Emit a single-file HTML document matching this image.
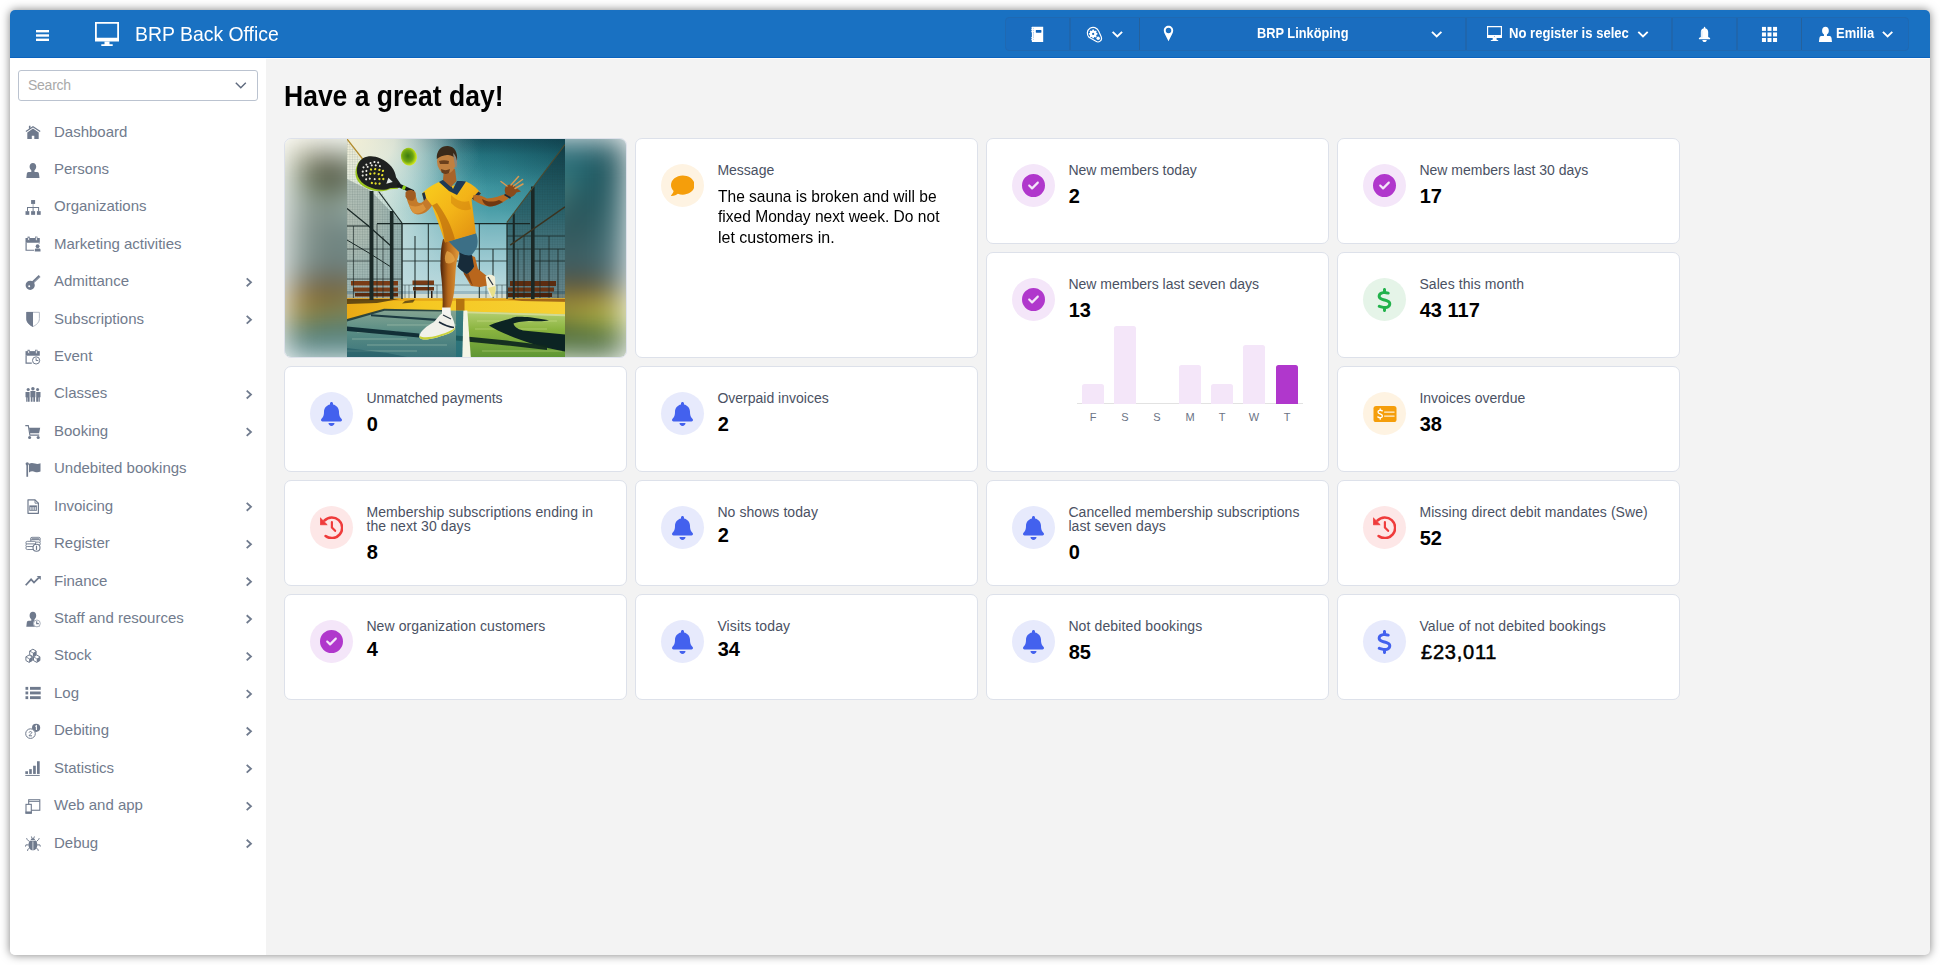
<!DOCTYPE html>
<html lang="en">
<head>
<meta charset="utf-8">
<title>BRP Back Office</title>
<style>
*{box-sizing:border-box;margin:0;padding:0}
html,body{width:1940px;height:965px;overflow:hidden;background:#fff}
body{font-family:"Liberation Sans",sans-serif;position:relative}
#frame{position:absolute;left:10px;top:10px;width:1920px;height:945px;background:#f3f3f3;border-radius:5px;box-shadow:0 0 10px rgba(0,0,0,.5);overflow:hidden}
#hdr{position:absolute;left:0;top:0;width:1920px;height:48px;background:#1971c2;border-bottom:1px solid #0b63be;color:#fff}
#side{position:absolute;left:0;top:48px;width:256px;height:897px;background:#fff}
#main{position:absolute;left:256px;top:48px;width:1664px;height:897px}
#main::before{content:"";position:absolute;left:0;top:0;width:1664px;height:1px;background:#fffdfa}
.abs{position:absolute}
/* header */
#burger{position:absolute;left:26px;top:20px;width:13px;height:11px}
#logo{position:absolute;left:85px;top:12px;width:24px;height:24px}
#brand{position:absolute;left:124.6px;top:0;height:48px;line-height:48px;font-size:20.6px;white-space:nowrap;transform-origin:0 50%;transform:scaleX(.9424)}
#tb{position:absolute;left:995px;top:7px;width:904px;height:34px;border-radius:4px;background:#1a6dbf;border:1px solid #1f69b2}
#tb .sep{position:absolute;top:0;width:1px;height:32px;background:#1f69b2}
#tb .t{position:absolute;top:0;height:32px;line-height:31px;font-size:14.4px;font-weight:bold;white-space:nowrap;color:#fff;transform-origin:0 50%}
#tb svg{position:absolute}
/* sidebar */
#search{position:absolute;left:8px;top:12px;width:240px;height:31px;border:1px solid #bbc3d0;border-radius:3px;background:#fff}
#search span{position:absolute;left:9px;top:0;line-height:29px;font-size:14px;letter-spacing:-0.25px;color:#a9a9a9}
#search svg{position:absolute;right:10px;top:10px}
.mi{position:absolute;left:0;width:256px;height:37px}
.mi .tx{position:absolute;left:44px;top:0;line-height:37px;font-size:15px;color:#717b8d;white-space:nowrap}
.mi svg.ic{position:absolute;left:15px;top:11px;width:16px;height:16px;overflow:visible}
.mi svg.ch{position:absolute;left:235px;top:13px;width:9px;height:11px;overflow:visible}
/* content */
#title{position:absolute;left:18.2px;top:20px;font-size:29px;font-weight:bold;color:#000;line-height:36px;white-space:nowrap;transform-origin:0 50%;transform:scaleX(.914)}
.card{position:absolute;width:343px;height:106px;background:#fff;border:1px solid #dde1ea;border-radius:7px}
.card.tall{height:220px}
.c1{left:18px}.c2{left:369px}.c3{left:720px}.c4{left:1071px}
.r1{top:80px}.r2{top:194px}.r3{top:308px}.r4{top:422px}.r5{top:536px}
.circ{position:absolute;left:25px;top:25px;width:43px;height:43px;border-radius:50%}
.circ svg{position:absolute}
.lbl{position:absolute;left:81.4px;top:24px;font-size:14px;line-height:14px;color:#4a5163;white-space:nowrap}
.val{position:absolute;left:81.7px;top:45px;font-size:20px;line-height:24px;font-weight:bold;color:#000;white-space:nowrap}
.bl{background:#e7eafc}.pu{background:#f4e6f9}.or{background:#fef3e2}.gr{background:#e5f4e8}.rd{background:#fde7e7}
.msg{position:absolute;left:81.7px;font-size:16.4px;line-height:20px;color:#000;white-space:nowrap;transform-origin:0 50%}
.chart{position:absolute;left:0;top:0;width:341px;height:218px}
.chart .axis{position:absolute;left:90px;top:150px;width:226px;height:1px;background:#e2e2e2}
.chart .bar{position:absolute;bottom:67px;width:22px;background:#f4e6f9;border-radius:2.5px 2.5px 0 0}
.chart .bar.on{background:#b037cc}
.chart .bl2{position:absolute;top:156px;width:22px;text-align:center;font-size:11px;line-height:16px;color:#6b7385}
#imgcard{overflow:hidden}
#imgcard .bgw{position:absolute;left:0;top:0;width:341px;height:218px;filter:blur(16px)}
#imgcard .bgp{position:absolute;left:0;top:0;display:block}
#imgcard .fgp{position:absolute;left:62px;top:0;display:block}
</style>
</head>
<body>
<div id="frame">
<div id="hdr">
<svg id="burger" viewBox="0 0 13 11"><rect x="0" y="0" width="13" height="2.4" fill="#fff"/><rect x="0" y="4.3" width="13" height="2.4" fill="#fff"/><rect x="0" y="8.6" width="13" height="2.4" fill="#fff"/></svg>
<svg id="logo" viewBox="0 0 24 24"><path fill="#fff" fill-rule="evenodd" d="M0 0h24v19.6H0zM1.8 1.8v14h20.4v-14z"/><path fill="#fff" d="M9.5 19.6h5v2.7h3.2V24H6.3v-1.7h3.2z"/></svg>
<div id="brand">BRP Back Office</div>
<div id="tb"><svg style="left:0;top:0" width="902" height="32" viewBox="0 0 902 32"><rect x="63.5" y="0" width="1" height="32" fill="#25619c"/><rect x="133" y="0" width="1" height="32" fill="#25619c"/><rect x="459.5" y="0" width="1" height="32" fill="#25619c"/><rect x="665.5" y="0" width="1" height="32" fill="#25619c"/><rect x="730.5" y="0" width="1" height="32" fill="#25619c"/><rect x="795" y="0" width="1" height="32" fill="#25619c"/><g transform="translate(24.50 8.40) scale(1.0000 0.9935)"><path fill="#fff" d="M1.400 .300H12.700V15.700H1.400V14.100L.400 13.400 1.400 12.700V12.100L.400 11.400 1.400 10.700V6.100L.400 5.400 1.400 4.700V4.100L.400 3.400 1.400 2.700V2.200L.400 1.500 1.400 .800z"/><rect x="5.300" y="3.500" width="5.600" height="3" rx=".5" fill="#0f62b8"/><g fill="#9fc1e6"><circle cx="2.900" cy="1.900" r=".55"/><circle cx="2.900" cy="3.900" r=".55"/><circle cx="2.900" cy="6" r=".55"/><circle cx="2.900" cy="10.900" r=".55"/><circle cx="2.900" cy="13" r=".55"/><rect x="2.600" y="6.400" width=".6" height="4"/></g></g><g transform="translate(80.70 8.70) scale(0.9550 0.9550)"><path d="M2.390 11.110A6.150 6.150 0 1 1 12.480 4.480L15.300 10.880A3.750 3.750 0 0 1 9.660 15.250z" fill="none" stroke="#fff" stroke-width="1.200" stroke-linejoin="round"/><path fill="#fff" fill-rule="evenodd" d="M6.060 3.040H7.460L7.700 4.020 8.620 4.400 9.480 3.880 10.470 4.870 9.950 5.730 10.330 6.650 11.310 6.890V8.290L10.330 8.530 9.950 9.450 10.470 10.310 9.480 11.300 8.620 10.780 7.700 11.160 7.460 12.140H6.060L5.820 11.160 4.900 10.780 4.040 11.300 3.050 10.310 3.570 9.450 3.190 8.530 2.210 8.290V6.890L3.190 6.650 3.570 5.730 3.050 4.870 4.040 3.880 4.900 4.400 5.820 4.020zM6.760 6.440A1.150 1.150 0 1 0 6.760 8.740A1.150 1.150 0 1 0 6.760 6.440z"/><circle cx="12" cy="12" r="1.800" fill="#fff"/></g><path d="M106.70 13.90L111.40 18.50L116.10 13.90" fill="none" stroke="#fff" stroke-width="1.900"/><g transform="translate(157.50 7.50) scale(1.0000 1.0000)"><path fill="#fff" fill-rule="evenodd" d="M5 .300C7.600 .300 9.700 2.400 9.700 5C9.700 6.200 9.300 7.200 8.800 8.300L5 15.700L1.200 8.300C.700 7.200 .300 6.200 .300 5C.300 2.400 2.400 .300 5 .300zM5 2.300A2.750 2.750 0 1 0 5 7.800A2.750 2.750 0 1 0 5 2.300z"/></g><path d="M426.00 13.90L430.70 18.50L435.40 13.90" fill="none" stroke="#fff" stroke-width="1.900"/><g transform="translate(481.00 7.90) scale(1.0000 1.0000)"><path fill="#fff" fill-rule="evenodd" d="M0 0H15V12.100H0zM1.150 1.250V9.200H13.850V1.250z"/><path fill="#fff" d="M5.700 12.100H9.600V13.900L11.200 14.300V15.100H3.800V14.300L5.700 13.900z"/><circle cx="7.500" cy="10.600" r=".6" fill="#8db5e0"/></g><path d="M632.30 13.90L637.00 18.50L641.70 13.90" fill="none" stroke="#fff" stroke-width="1.900"/><g transform="translate(692.40 8.40) scale(1.0090 1.0000)"><path fill="#fff" d="M5.400 1.100A.7 .7 0 0 1 6.800 1.100V1.900C8.600 2.300 9.700 3.700 9.700 5.600V10.600L11.600 11.700V12.800H.500V11.700L2.400 10.600V5.600C2.400 3.700 3.500 2.300 5.400 1.900z"/><path fill="#fff" d="M3.900 13.500H8.300C8.300 14.700 7.300 15.600 6.100 15.600C4.900 15.600 3.900 14.700 3.900 13.500z"/><path d="M3.500 4.500V11.200" stroke="#1a6dbf" stroke-opacity=".35" stroke-width=".6" fill="none"/></g><g transform="translate(755.95 8.90) scale(1.0000 1.0000)"><rect x="0" y="0" width="4" height="4" fill="#fff"/><rect x="5.55" y="0" width="4" height="4" fill="#fff"/><rect x="11.1" y="0" width="4" height="4" fill="#fff"/><rect x="0" y="5.55" width="4" height="4" fill="#fff"/><rect x="5.55" y="5.55" width="4" height="4" fill="#fff"/><rect x="11.1" y="5.55" width="4" height="4" fill="#fff"/><rect x="0" y="11.1" width="4" height="4" fill="#fff"/><rect x="5.55" y="11.1" width="4" height="4" fill="#fff"/><rect x="11.1" y="11.1" width="4" height="4" fill="#fff"/></g><g transform="translate(812.50 8.50) scale(0.9924 0.9934)"><path fill="#fff" d="M7 .300C9 .300 10.400 1.900 10.400 4.200C10.400 5.800 9.700 7.300 8.500 8V9.500H11.200C12.300 9.500 12.800 10.200 13.100 11.500L13.600 15.500H.400L.900 11.500C1.200 10.200 1.700 9.500 2.800 9.500H5.500V8C4.300 7.300 3.600 5.800 3.600 4.200C3.600 1.900 5 .300 7 .300z"/></g><path d="M876.90 13.90L881.60 18.50L886.30 13.90" fill="none" stroke="#fff" stroke-width="1.900"/></svg><div class="t" style="left:250.600px;transform:scaleX(.889)">BRP Linköping</div><div class="t" style="left:502.500px;width:132px;overflow:hidden;transform:scaleX(.908)">No register is selected</div><div class="t" style="left:830px;transform:scaleX(.9)">Emilia</div></div>
</div>
<div id="side">
<div id="search"><span>Search</span><svg width="12" height="8" viewBox="0 0 12 8"><path d="M.8 1.800l5 5 5-5" fill="none" stroke="#5f6a7e" stroke-width="1.400"/></svg></div>
<div class="mi" style="top:55.00px"><svg class="ic" viewBox="0 0 16 16" style="top:10.00px"><g transform="translate(0 0.90)"><path d="M.9 7.700L8 2.900L15.200 7.700" fill="none" stroke="#6f7a8d" stroke-width="1.250"/><path fill="#6f7a8d" d="M3.900 1.900h1.600v3h-1.600zM2.300 8.600L8 4.700L13.700 8.600V15.100H9.300V11.800H6.800V15.100H2.300z"/></g></svg><span class="tx">Dashboard</span></div>
<div class="mi" style="top:92.00px"><svg class="ic" viewBox="0 0 16 16" style="top:11.00px"><g transform="translate(0 0.32)"><path fill="#6f7a8d" d="M7.900 1.700C9.900 1.700 11.200 3.200 11.200 5.300C11.200 6.900 10.500 8.300 9.500 9V10.700H12.200C13.300 10.700 13.800 11.400 14 12.600L14.500 16.700H1.300L1.800 12.600C2 11.400 2.500 10.700 3.600 10.700H6.300V9C5.300 8.300 4.600 6.900 4.600 5.300C4.600 3.200 5.900 1.700 7.900 1.700z"/></g></svg><span class="tx">Persons</span></div>
<div class="mi" style="top:129.00px"><svg class="ic" viewBox="0 0 16 16" style="top:11.00px"><g transform="translate(0 0.74)"><g fill="#6f7a8d"><rect x="6.100" y="1.300" width="4" height="3.900"/><rect x=".5" y="12.400" width="3.800" height="3.700"/><rect x="6.100" y="12.400" width="4" height="3.700"/><rect x="11.900" y="12.400" width="3.800" height="3.700"/><path d="M2 8.300H14.100V12.400H13.100V9.300H8.600V12.400H7.600V9.300H3V12.400H2z"/></g><rect x="7.600" y="5.200" width="1" height="3.100" fill="#aab1bd"/></g></svg><span class="tx">Organizations</span></div>
<div class="mi" style="top:167.00px"><svg class="ic" viewBox="0 0 16 16" style="top:11.00px"><g transform="translate(0 0.16)"><path fill="#6f7a8d" d="M.5 1.800H14.800V6.500H.5z"/><path d="M1.100 6.500V14.100H9" fill="none" stroke="#6f7a8d" stroke-width="1.200"/><path d="M14.200 6.500V7.800" stroke="#aab1bd" stroke-width="1" fill="none"/><g fill="#fff" stroke="#6f7a8d" stroke-width=".7"><rect x="2.900" y=".8" width="1.600" height="3.700"/><rect x="10.500" y=".8" width="1.600" height="3.700"/></g><circle cx="12.600" cy="10.100" r="1.900" fill="#6f7a8d"/><path fill="#6f7a8d" d="M9.800 15.400V13.600C9.800 12.800 10.400 12.300 11.200 12.300H14.100C14.900 12.300 15.500 12.800 15.500 13.600V15.400z"/></g></svg><span class="tx">Marketing activities</span></div>
<div class="mi" style="top:204.00px"><svg class="ic" viewBox="0 0 16 16" style="top:11.00px"><g transform="translate(0 0.58)"><path d="M6.800 9.800L14.600 2.400" stroke="#6f7a8d" stroke-width="2.700" fill="none"/><path d="M8.800 9L15.200 2.900" stroke="#fff" stroke-width=".5" stroke-opacity=".7" fill="none"/><path fill="#6f7a8d" fill-rule="evenodd" d="M5.200 7.100A4.600 4.600 0 1 0 5.200 16.300A4.600 4.600 0 1 0 5.200 7.100zM4.200 11.600A1 1 0 1 0 4.200 13.600A1 1 0 1 0 4.200 11.600z"/></g></svg><span class="tx">Admittance</span><svg class="ch" viewBox="0 0 9 11" style="top:14px"><path transform="translate(0 0.83)" d="M1.700 1.600L6 5.500L1.700 9.400" fill="none" stroke="#707b8e" stroke-width="1.800"/></svg></div>
<div class="mi" style="top:242.00px"><svg class="ic" viewBox="0 0 16 16" style="top:11.00px"><g transform="translate(0 0.00)"><path d="M1.700 1.300H14.400V7.600C14.400 11.400 11.500 13.900 8 15.500C4.500 13.900 1.700 11.400 1.700 7.600z" fill="#fff" stroke="#aab1bd" stroke-width=".9"/><path fill="#6f7a8d" d="M1.300 .9H8V15.900C4.300 14.300 1.300 11.700 1.300 7.600z"/></g></svg><span class="tx">Subscriptions</span><svg class="ch" viewBox="0 0 9 11" style="top:14px"><path transform="translate(0 0.25)" d="M1.700 1.600L6 5.500L1.700 9.400" fill="none" stroke="#707b8e" stroke-width="1.800"/></svg></div>
<div class="mi" style="top:279.00px"><svg class="ic" viewBox="0 0 16 16" style="top:11.00px"><g transform="translate(0 0.42)"><path fill="#6f7a8d" d="M.5 2.700H14.800V7.300H.5z"/><path d="M1.100 7.300V14.800H6.800" fill="none" stroke="#6f7a8d" stroke-width="1.200"/><g fill="#fff" stroke="#6f7a8d" stroke-width=".7"><rect x="2.900" y="1.700" width="1.600" height="3.700"/><rect x="10.500" y="1.700" width="1.600" height="3.700"/></g><circle cx="11.100" cy="12" r="3.600" fill="#fff" stroke="#6f7a8d" stroke-width="1"/><path d="M11.100 9.800V12.100H13.300" fill="none" stroke="#6f7a8d" stroke-width="1"/></g></svg><span class="tx">Event</span></div>
<div class="mi" style="top:316.00px"><svg class="ic" viewBox="0 0 16 16" style="top:11.00px"><g transform="translate(0 0.84)"><g fill="#6f7a8d"><circle cx="7.900" cy="2.800" r="1.750"/><circle cx="3.200" cy="3.700" r="1.550"/><circle cx="12.600" cy="3.700" r="1.550"/><path d="M5.400 5.100H10.400V11.300H10V16H8.300V11.500H7.500V16H5.800V11.300H5.400z"/><path d="M.5 6.200H4.600V16H3V11.700H2.600V16H1.200V11.500H.5z"/><path d="M11.200 6.200H15.500V11.500H14.800V16H13.400V11.700H13V16H11.200z"/></g></g></svg><span class="tx">Classes</span><svg class="ch" viewBox="0 0 9 11" style="top:15px"><path transform="translate(0 0.09)" d="M1.700 1.600L6 5.500L1.700 9.400" fill="none" stroke="#707b8e" stroke-width="1.800"/></svg></div>
<div class="mi" style="top:354.00px"><svg class="ic" viewBox="0 0 16 16" style="top:11.00px"><g transform="translate(0 0.26)"><path d="M.3 2.400H3.300L4.900 11.900H14.200" fill="none" stroke="#6f7a8d" stroke-width="1.100"/><path fill="#6f7a8d" d="M4 4.500H15.200L14.100 9.900H4.900z"/><circle cx="4.600" cy="14.200" r="1.550" fill="#6f7a8d"/><circle cx="13.200" cy="14.200" r="1.550" fill="#6f7a8d"/></g></svg><span class="tx">Booking</span><svg class="ch" viewBox="0 0 9 11" style="top:14px"><path transform="translate(0 0.51)" d="M1.700 1.600L6 5.500L1.700 9.400" fill="none" stroke="#707b8e" stroke-width="1.800"/></svg></div>
<div class="mi" style="top:391.00px"><svg class="ic" viewBox="0 0 16 16" style="top:11.00px"><g transform="translate(0 0.68)"><g fill="#6f7a8d"><rect x="1.400" y="3" width="1.700" height="13.100"/><circle cx="2.250" cy="3.100" r="1.650"/><path d="M4 3.100C6 1.900 8 2.200 10 2.900C12 3.600 13.800 3.300 15.500 2.500V10.800C13.800 11.600 12 11.900 10 11.200C8 10.500 6 10.400 4 11.700z"/></g></g></svg><span class="tx">Undebited bookings</span></div>
<div class="mi" style="top:429.00px"><svg class="ic" viewBox="0 0 16 16" style="top:11.00px"><g transform="translate(0 0.10)"><path d="M3 1.700H10L13.400 5.100V15.200H3z" fill="#fff" stroke="#6f7a8d" stroke-width="1.200" stroke-linejoin="round"/><path d="M10 1.700V5.100H13.400" fill="none" stroke="#6f7a8d" stroke-width=".9"/><rect x="4.300" y="7.300" width="7.600" height="5.400" fill="#6f7a8d"/><g fill="#d5d9df"><rect x="5.100" y="9" width="1.500" height="2.800"/><rect x="7.350" y="9" width="1.500" height="2.800"/><rect x="9.600" y="9" width="1.500" height="2.800"/></g></g></svg><span class="tx">Invoicing</span><svg class="ch" viewBox="0 0 9 11" style="top:14px"><path transform="translate(0 0.35)" d="M1.700 1.600L6 5.500L1.700 9.400" fill="none" stroke="#707b8e" stroke-width="1.800"/></svg></div>
<div class="mi" style="top:466.00px"><svg class="ic" viewBox="0 0 16 16" style="top:11.00px"><g transform="translate(0 0.52)"><g fill="#fff" stroke="#6f7a8d" stroke-width=".9"><rect x="5.500" y="1.800" width="9.800" height="3.200" rx="1.500"/><rect x="5.500" y="4.200" width="9.800" height="3.200" rx="1.500"/><rect x="5.500" y="6.600" width="9.800" height="3.200" rx="1.500"/><rect x=".9" y="5.800" width="9.800" height="3" rx="1.400"/><rect x=".9" y="8.400" width="9.800" height="3" rx="1.400"/><rect x=".9" y="11" width="9.800" height="3" rx="1.400"/></g><path d="M6.500 3.400H14.300" stroke="#6f7a8d" stroke-width="1.300"/><circle cx="11.500" cy="12.300" r="3.500" fill="#fff" stroke="#6f7a8d" stroke-width="1.100"/><path d="M11.500 10.200V14.400" stroke="#6f7a8d" stroke-width="1.200"/></g></svg><span class="tx">Register</span><svg class="ch" viewBox="0 0 9 11" style="top:14px"><path transform="translate(0 0.77)" d="M1.700 1.600L6 5.500L1.700 9.400" fill="none" stroke="#707b8e" stroke-width="1.800"/></svg></div>
<div class="mi" style="top:504.00px"><svg class="ic" viewBox="0 0 16 16" style="top:10.00px"><g transform="translate(0 0.94)"><path d="M.7 12.300L6.100 6.500L9 9.600L13.800 4.700" fill="none" stroke="#6f7a8d" stroke-width="1.800"/><path fill="#6f7a8d" d="M11.700 3.100H15.800V7.100z"/></g></svg><span class="tx">Finance</span><svg class="ch" viewBox="0 0 9 11" style="top:14px"><path transform="translate(0 0.19)" d="M1.700 1.600L6 5.500L1.700 9.400" fill="none" stroke="#707b8e" stroke-width="1.800"/></svg></div>
<div class="mi" style="top:541.00px"><svg class="ic" viewBox="0 0 16 16" style="top:11.00px"><g transform="translate(0 0.36)"><path fill="#6f7a8d" d="M7.900 1.500C9.900 1.500 11.200 3 11.200 5.100C11.200 6.700 10.500 8.100 9.500 8.800V10.500H12.200C13.300 10.500 13.800 11.200 14 12.400L14.500 16.400H1.300L1.800 12.400C2 11.200 2.500 10.500 3.600 10.500H6.300V8.800C5.300 8.100 4.600 6.700 4.600 5.100C4.600 3 5.900 1.500 7.900 1.500z"/><circle cx="11.900" cy="13.100" r="3.400" fill="#fff" stroke="#aab1bd" stroke-width="1"/><path d="M11.700 11V13.300H13.800" fill="none" stroke="#6f7a8d" stroke-width="1.100"/></g></svg><span class="tx">Staff and resources</span><svg class="ch" viewBox="0 0 9 11" style="top:14px"><path transform="translate(0 0.61)" d="M1.700 1.600L6 5.500L1.700 9.400" fill="none" stroke="#707b8e" stroke-width="1.800"/></svg></div>
<div class="mi" style="top:578.00px"><svg class="ic" viewBox="0 0 16 16" style="top:11.00px"><g transform="translate(0 0.78)"><polygon points="7.90,1.40 11.10,3.25 11.10,6.95 7.90,8.80 4.70,6.95 4.70,3.25" fill="#fff" stroke="#6f7a8d" stroke-width="1" stroke-linejoin="round"/><polygon points="7.90,5.10 11.10,3.25 11.10,6.95 7.90,8.80" fill="#6f7a8d"/><path d="M4.70 3.25L7.90 5.10" stroke="#6f7a8d" stroke-width=".8" fill="none"/><polygon points="4.10,7.20 7.30,9.05 7.30,12.75 4.10,14.60 0.90,12.75 0.90,9.05" fill="#fff" stroke="#6f7a8d" stroke-width="1" stroke-linejoin="round"/><polygon points="4.10,10.90 7.30,9.05 7.30,12.75 4.10,14.60" fill="#6f7a8d"/><path d="M0.90 9.05L4.10 10.90" stroke="#6f7a8d" stroke-width=".8" fill="none"/><polygon points="11.70,7.20 14.90,9.05 14.90,12.75 11.70,14.60 8.50,12.75 8.50,9.05" fill="#fff" stroke="#6f7a8d" stroke-width="1" stroke-linejoin="round"/><polygon points="11.70,10.90 14.90,9.05 14.90,12.75 11.70,14.60" fill="#6f7a8d"/><path d="M8.50 9.05L11.70 10.90" stroke="#6f7a8d" stroke-width=".8" fill="none"/></g></svg><span class="tx">Stock</span><svg class="ch" viewBox="0 0 9 11" style="top:15px"><path transform="translate(0 0.03)" d="M1.700 1.600L6 5.500L1.700 9.400" fill="none" stroke="#707b8e" stroke-width="1.800"/></svg></div>
<div class="mi" style="top:616.00px"><svg class="ic" viewBox="0 0 16 16" style="top:11.00px"><g transform="translate(0 0.20)"><g fill="#6f7a8d"><rect x=".5" y="1.700" width="2.700" height="2.900"/><rect x=".5" y="6.300" width="2.700" height="2.900"/><rect x=".5" y="11" width="2.700" height="2.900"/><rect x="5" y="1.700" width="10.700" height="2.900"/><rect x="5" y="6.300" width="10.700" height="2.900"/><rect x="5" y="11" width="10.700" height="2.900"/></g></g></svg><span class="tx">Log</span><svg class="ch" viewBox="0 0 9 11" style="top:14px"><path transform="translate(0 0.45)" d="M1.700 1.600L6 5.500L1.700 9.400" fill="none" stroke="#707b8e" stroke-width="1.800"/></svg></div>
<div class="mi" style="top:653.00px"><svg class="ic" viewBox="0 0 16 16" style="top:11.00px"><g transform="translate(0 0.62)"><circle cx="11.100" cy="5.200" r="4.100" fill="#6f7a8d"/><path d="M10.300 3.900L11.400 3.100V7.400" fill="none" stroke="#fff" stroke-width="1.100"/><circle cx="5.500" cy="11" r="4.800" fill="#fff" stroke="#6f7a8d" stroke-width="1"/><path d="M4.100 10C4.100 8.600 6.800 8.600 6.800 10C6.800 11.100 4.200 11.700 4.100 13.200H7" fill="none" stroke="#6f7a8d" stroke-width="1"/></g></svg><span class="tx">Debiting</span><svg class="ch" viewBox="0 0 9 11" style="top:14px"><path transform="translate(0 0.87)" d="M1.700 1.600L6 5.500L1.700 9.400" fill="none" stroke="#707b8e" stroke-width="1.800"/></svg></div>
<div class="mi" style="top:691.00px"><svg class="ic" viewBox="0 0 16 16" style="top:11.00px"><g transform="translate(0 0.04)"><g fill="#6f7a8d"><rect x=".3" y="11.200" width="2.700" height="2.700"/><rect x="4.200" y="9.100" width="2.600" height="4.800"/><rect x="8.100" y="5.700" width="2.700" height="8.200"/><rect x="12" y="1.200" width="2.700" height="12.700"/><rect x=".3" y="14.900" width="14.400" height=".95"/></g></g></svg><span class="tx">Statistics</span><svg class="ch" viewBox="0 0 9 11" style="top:14px"><path transform="translate(0 0.29)" d="M1.700 1.600L6 5.500L1.700 9.400" fill="none" stroke="#707b8e" stroke-width="1.800"/></svg></div>
<div class="mi" style="top:728.00px"><svg class="ic" viewBox="0 0 16 16" style="top:11.00px"><g transform="translate(0 0.46)"><rect x="3.700" y="2.300" width="11.100" height="10.500" fill="#fff" stroke="#6f7a8d" stroke-width="1.100"/><path d="M3.700 4H14.800" stroke="#6f7a8d" stroke-width=".9"/><rect x="1" y="6.900" width="5.300" height="8.800" fill="#fff" stroke="#6f7a8d" stroke-width="1.100"/><rect x=".5" y="14" width="6.300" height="2.200" fill="#6f7a8d"/></g></svg><span class="tx">Web and app</span><svg class="ch" viewBox="0 0 9 11" style="top:14px"><path transform="translate(0 0.71)" d="M1.700 1.600L6 5.500L1.700 9.400" fill="none" stroke="#707b8e" stroke-width="1.800"/></svg></div>
<div class="mi" style="top:766.00px"><svg class="ic" viewBox="0 0 16 16" style="top:10.00px"><g transform="translate(0 0.88)"><g fill="none" stroke="#6f7a8d" stroke-width="1"><path d="M6.400 1.600L7.300 4M9.400 1.600L8.500 4"/><path d="M4.300 6.700L2 4.400L1.600 3.300M11.500 6.700L13.800 4.400L14.200 3.300"/><path d="M3.700 10H.9L.5 11.700M12.100 10H14.900L15.300 11.700"/><path d="M4.500 13.300L2.600 14.700V16M11.300 13.300L13.200 14.700V16"/></g><path fill="#6f7a8d" d="M7.900 3.300C9 3.300 9.900 4.100 10.100 5.100C11.500 5.900 12.300 7.700 12.300 10C12.300 13 10.400 15.300 7.900 15.300C5.400 15.300 3.500 13 3.500 10C3.500 7.700 4.300 5.900 5.700 5.100C5.900 4.100 6.800 3.300 7.900 3.300z"/><path d="M7.900 6.500V15M5 5.600H10.800" stroke="#dfe2e7" stroke-width=".9" fill="none"/></g></svg><span class="tx">Debug</span><svg class="ch" viewBox="0 0 9 11" style="top:14px"><path transform="translate(0 0.13)" d="M1.700 1.600L6 5.500L1.700 9.400" fill="none" stroke="#707b8e" stroke-width="1.800"/></svg></div>
</div>
<div id="main">
<div id="title">Have a great day!</div>
<div class="card c1 r1 tall" id="imgcard"><div class="bgw"><svg class="bgp" viewBox="0 0 218 218" preserveAspectRatio="none" width="341" height="218"><defs><linearGradient id="skyb" x1="0" y1="0" x2="0" y2="1"><stop offset="0" stop-color="#1f6572"/><stop offset=".1" stop-color="#2c8994"/><stop offset=".45" stop-color="#4c9fa9"/><stop offset=".8" stop-color="#9ccbd2"/><stop offset="1" stop-color="#c6dfe0"/></linearGradient><radialGradient id="sunb" cx="0" cy="0" r="1" gradientUnits="userSpaceOnUse" gradientTransform="translate(-8 70) scale(150 160)"><stop offset="0" stop-color="#f1f1e0" stop-opacity="1"/><stop offset=".25" stop-color="#e8eee0" stop-opacity=".9"/><stop offset=".5" stop-color="#dcebe4" stop-opacity=".6"/><stop offset=".72" stop-color="#d0e4e0" stop-opacity=".25"/><stop offset=".88" stop-color="#d0e4e0" stop-opacity=".07"/><stop offset="1" stop-color="#d0e4e0" stop-opacity="0"/></radialGradient><radialGradient id="sun2b" cx="0" cy="0" r="1" gradientUnits="userSpaceOnUse" gradientTransform="translate(0 0) scale(135 95)"><stop offset="0" stop-color="#f3efd6" stop-opacity="1"/><stop offset=".35" stop-color="#eceedd" stop-opacity=".85"/><stop offset=".65" stop-color="#dcebe4" stop-opacity=".4"/><stop offset=".85" stop-color="#d0e4e0" stop-opacity=".1"/><stop offset="1" stop-color="#d0e4e0" stop-opacity="0"/></radialGradient><radialGradient id="dkb" cx="0" cy="0" r="1" gradientUnits="userSpaceOnUse" gradientTransform="translate(232 0) scale(120 100)"><stop offset="0" stop-color="#0a3642" stop-opacity=".6"/><stop offset=".35" stop-color="#0c3a46" stop-opacity=".32"/><stop offset=".7" stop-color="#0e3f4c" stop-opacity=".1"/><stop offset="1" stop-color="#0e3f4c" stop-opacity="0"/></radialGradient><linearGradient id="dk2b" x1="0" y1="0" x2="0" y2="1"><stop offset="0" stop-color="#0a2f3c" stop-opacity=".35"/><stop offset=".3" stop-color="#0a2f3c" stop-opacity="0"/></linearGradient><linearGradient id="yelb" x1="0" y1="0" x2="1" y2="0"><stop offset="0" stop-color="#eaa915"/><stop offset=".35" stop-color="#f5c822"/><stop offset="1" stop-color="#f6d034"/></linearGradient><linearGradient id="ctlb" x1="0" y1="0" x2="0" y2="1"><stop offset="0" stop-color="#86a592"/><stop offset=".45" stop-color="#5a8d85"/><stop offset="1" stop-color="#3c757b"/></linearGradient><linearGradient id="ctrb" x1="0" y1="0" x2="0" y2="1"><stop offset="0" stop-color="#b4cf72"/><stop offset=".4" stop-color="#8ab43f"/><stop offset="1" stop-color="#5f9634"/></linearGradient><radialGradient id="ballb" cx=".45" cy=".45" r=".6"><stop offset="0" stop-color="#3c7a0f"/><stop offset=".55" stop-color="#6ea512"/><stop offset=".85" stop-color="#c5e019"/><stop offset="1" stop-color="#e2f03a"/></radialGradient><linearGradient id="shb" x1="0" y1="0" x2="1" y2="1"><stop offset="0" stop-color="#f9cf1d"/><stop offset=".5" stop-color="#f3b318"/><stop offset="1" stop-color="#dd8a10"/></linearGradient><linearGradient id="legb" x1="0" y1="0" x2="1" y2="0"><stop offset="0" stop-color="#4d2209"/><stop offset=".4" stop-color="#b3661a"/><stop offset="1" stop-color="#e39c3c"/></linearGradient><pattern id="meshb" width="2.500" height="2.500" patternUnits="userSpaceOnUse"><path d="M0 0H2.500M0 0V2.500" stroke="#1d3a3a" stroke-width=".4" stroke-opacity=".45" fill="none"/></pattern><clipPath id="clpb"><rect x="0" y="0" width="218" height="218"/></clipPath></defs><g clip-path="url(#clpb)"><rect width="218" height="160" fill="url(#skyb)"/><rect width="218" height="160" fill="url(#dkb)"/><rect width="218" height="160" fill="url(#dk2b)"/><rect width="218" height="160" fill="url(#sunb)"/><rect width="218" height="160" fill="url(#sun2b)"/><rect x="0" y="152" width="218" height="3" fill="#6f93a3" opacity=".6"/><rect x="0" y="155" width="218" height="5" fill="#e6dfc4" opacity=".75"/><polygon points="0,40 24,52 55,84 55,160 0,160" fill="#566b69" opacity=".36"/><polygon points="0,0 55,84 55,160 0,160" fill="url(#meshb)"/><polygon points="218,5 160,84 160,160 218,160" fill="#0d2e36" opacity=".5"/><polygon points="218,5 160,84 160,160 218,160" fill="url(#meshb)"/><rect x="55" y="85" width="105" height="75" fill="#bcd9e0" opacity=".25"/><g fill="#7a3c16"><rect x="4" y="142" width="47" height="4.500"/><rect x="6" y="148.500" width="45" height="4"/><rect x="8" y="154" width="43" height="3.500" fill="#5a2a0e"/><rect x="65.500" y="141.500" width="21.500" height="4.500"/><rect x="66" y="148" width="21" height="3.500" fill="#6a3212"/><rect x="67" y="152" width="1.500" height="7" fill="#2b1a10"/><rect x="84" y="152" width="1.500" height="7" fill="#2b1a10"/><rect x="163" y="142" width="46" height="5" fill="#5c2c10"/><rect x="161" y="148.500" width="46" height="4" fill="#6a3212"/><rect x="161" y="154" width="44" height="4" fill="#4a220c"/></g><rect x="0" y="159.300" width="218" height="25" fill="url(#yelb)"/><rect x="0" y="159.300" width="218" height="2.500" fill="#d98c10" opacity=".55"/><polygon points="0,160 52,160 30,164 0,165" fill="#3a2a10" opacity=".75"/><polygon points="58,162 68,160.500 66,163.500 55,164.500" fill="#3a2a10" opacity=".7"/><polygon points="160,160 218,160 218,163 175,162" fill="#7a3a10" opacity=".6"/><polygon points="0,181.300 37.300,170.600 117.500,171.700 116,218 0,218" fill="url(#ctlb)"/><polygon points="119.500,172.500 218,175.300 218,218 123,218" fill="url(#ctrb)"/><polygon points="119.500,172.500 218,175.300 218,177.300 119.700,174.300" fill="#d9dfa0" opacity=".8"/><g stroke="#d6e6c8" stroke-opacity=".35" stroke-width="1.200" fill="none"><path d="M5 200H60M20 206H100M0 212H70M40 186H110M10 193H50"/><path d="M130 182H210M128 190H200M135 212H215M150 205H170" stroke="#e6f0b0"/></g><polygon points="0,180 37,169.800 95,171 95,172.600 37.500,171.800 0,182.500" fill="#16343a" opacity=".85"/><polygon points="24,175.300 93,180 93,182.300 24,177.300" fill="#123038" opacity=".9"/><polygon points="0,187.500 72,194.500 72,198.500 0,192" fill="#0e2a33" opacity=".95"/><polygon points="0,209 40,214 60,218 0,218" fill="#1c5460" opacity=".5"/><path d="M142 186.500C150 183 158 181 164 179.500C166 177.500 172 177.300 183 178.200L202 181.300C196 182.800 189 182.200 184 182C178 182 170 183 166.500 184.500C167 187 170 190 176 191.500L218 195.500V212.500C208 211 196 208 186 205C170 200 152 193 142 186.500z" fill="#0c2423"/><polygon points="109,196.500 160,201.500 200,206.500 200,211 160,206.500 109,201.500" fill="#10291f" opacity=".95"/><polygon points="116.300,171.500 120.300,171.500 123.800,218 115.200,218" fill="#f4f5e6"/><polygon points="109,160 117.500,160 117.500,171.500 109,171.500" fill="#b5740f"/><polygon points="109,171.500 116.300,171.500 115.200,218 109,218" fill="#1f6d78" opacity=".7"/><g stroke="#1a2826" fill="none" stroke-linecap="butt"><path d="M30 84.700H183" stroke-width="1.300"/><path d="M0 87H22" stroke-width="1"/><path d="M55 110H160M55 122H160" stroke-width=".9" stroke-opacity=".85"/><path d="M0 110H55M0 122H24M0 140H55" stroke-width=".8" stroke-opacity=".8"/><path d="M160 97H218M160 110H218M186 122H218" stroke-width=".9" stroke-opacity=".9"/><path d="M81.300 84.700V159M132.300 84.700V159M68 97V159M146 110V159" stroke-width="1"/><path d="M6.500 87V159M30 84.700V159M36 97V159" stroke-width=".8" stroke-opacity=".8"/><path d="M24.500 52V161" stroke-width="4"/><path d="M44.700 72V160" stroke-width="3.600"/><path d="M55 84V160" stroke-width="1.400"/><path d="M31.600 52.500L55 84" stroke-width="1.200"/><path d="M0 69.500L21.500 87L44 107" stroke-width="1.300"/><path d="M0 101L22 114L44 128" stroke-width="1"/><path d="M185.800 47.400V160" stroke-width="3.600"/><path d="M166.800 74.500V160" stroke-width="2"/><path d="M160 84V160" stroke-width="1.200"/><path d="M171 110V159M177 97V159M202 97V159M211 110V159M193 110V159" stroke-width=".9" stroke-opacity=".85"/><path d="M218 67.800L163.200 106.200" stroke-width="1.500" stroke="#3a3320"/><path d="M218 5.600L159.800 83.600" stroke-width="1.200" stroke="#4a4a32"/></g><path d="M0 0L16 20.500" stroke="#b08a2a" stroke-width="1.300" fill="none"/><g stroke="#2a3a3a" stroke-width=".7" stroke-opacity=".7" fill="none"><path d="M55 146H160M58 146V159M62 146V159M90 146V159M96 146V159M102 146V159M139 146V159M150 146V159M155 146V159"/></g><g transform="translate(27.300 36) rotate(24) scale(1.040)"><path d="M-19 -2C-19 -11 -11 -16.500 -1 -16.500C9 -16.500 16 -12 19.500 -6L26 -1.500L26 3L19 6.500C14 12 7 14.500 -2 14.500C-12 14.500 -19 8 -19 -2z" fill="#9bc51d"/><path d="M-18.500 -3.500C-18.500 -12 -10.500 -17 -1 -17C9 -17 16.500 -12.500 20 -6.500L26.500 -2.500L26.500 1.500L19.500 5C14.500 10.500 7.500 12.500 -1.500 12.500C-11.500 12.500 -18.500 5 -18.500 -3.500z" fill="#1e2120"/><g fill="#e8e8e0"><circle cx="-11" cy="-6" r="1"/><circle cx="-8" cy="-9" r="1"/><circle cx="-5" cy="-11.500" r="1"/><circle cx="-1.500" cy="-12.500" r="1"/><circle cx="-12.500" cy="-2.500" r="1"/><circle cx="-9" cy="-4.500" r="1"/><circle cx="-6" cy="-7.500" r="1"/><circle cx="-2.500" cy="-9" r="1"/><circle cx="1.500" cy="-10" r="1"/><circle cx="-11.500" cy="1.500" r="1"/><circle cx="-8.500" cy="-.5" r="1"/><circle cx="-10" cy="5" r="1"/><circle cx="-7" cy="3" r="1"/><circle cx="-5.500" cy="7" r="1"/><circle cx="-2.500" cy="5" r="1"/><circle cx="2" cy="3.500" r="1"/></g><g fill="#e3df2a"><circle cx="-5" cy="-3.500" r="1.100"/><circle cx="-1.500" cy="-5.500" r="1.100"/><circle cx="2.500" cy="-6.500" r="1.100"/><circle cx="6" cy="-7" r="1.100"/><circle cx="-4" cy=".5" r="1.100"/><circle cx="-.5" cy="-1.500" r="1.100"/><circle cx="3.500" cy="-2.500" r="1.100"/><circle cx="7" cy="-3" r="1.100"/><circle cx="1" cy="8" r="1.100"/><circle cx="4.500" cy="7" r="1.100"/><circle cx="8" cy="5.500" r="1.100"/><circle cx="6" cy="1.500" r="1.100"/><circle cx="9.500" cy="0" r="1.100"/></g><path d="M13.500 -3L19 -1L14 3z" fill="#dfe6e4"/><path d="M24 -.5L41 -.5" stroke="#15181a" stroke-width="3.600" fill="none"/><path d="M29.500 -.5H32.500" stroke="#8fd21a" stroke-width="3.800" fill="none"/></g><ellipse cx="61.900" cy="17.600" rx="8" ry="9" fill="url(#ballb)" transform="rotate(-15 61.900 17.600)"/><path d="M112 112L128 118L131 130L141 138L143 146L133 148L124 147L117 135z" fill="#b9661c"/><path d="M112 112L122 116L120 130L126 147L117 135z" fill="#6b3410" opacity=".7"/><path d="M138.500 137.500C141 135 146 135 148 138L148.500 147C149 152 148 157 145.500 158.500C142.500 158 141 152 140 148z" fill="#f2efd8"/><path d="M141 149C143 152 144 156 145.500 158.500C148 157 149 152 148.500 147z" fill="#e8e08a"/><path d="M141 138L146 146" stroke="#2a3540" stroke-width="1.300" fill="none"/><path d="M96 100L112 104C113 110 112 116 110 121C108.500 128 108.500 134 108 142C107.500 152 106.500 160 103 169.500L95.500 169.500C96 160 95.500 152 95 145C94.500 137 93 130 93.500 124C93.500 116 94 108 96 100z" fill="url(#legb)"/><path d="M100 112C104 113 107 116 108 121C106 124 103 125 99 124C97 120 98 115 100 112z" fill="#e8a848" opacity=".75"/><path d="M95 168.500H103.500L104 177H95z" fill="#f4f4f0"/><path d="M72.500 197C73 192 80 187 87 183C90 180 92 176 95 174.500L104.500 176.500C106 180 108 184 108 188.500C108 192 104 194 99 195.500C92 198 84 200.500 78 200.500C74 200.500 72 199 72.500 197z" fill="#f1f1ea"/><path d="M72.500 197C76 199 84 198.500 92 196C100 193.500 106 191 108 188.500C108 192 104 194 99 195.500C92 198 84 200.500 78 200.500C74 200.500 72 199 72.500 197z" fill="#c9d23a"/><path d="M92 183C97 186 102 188 107 188.500" stroke="#1c2b3a" stroke-width="1.600" fill="none"/><path d="M96 176L104 180" stroke="#26343f" stroke-width="1.200" fill="none"/><path d="M98 103L129 94C131 99 131 104 130 108C128 112 125 116 122 118.500L127 127.500C125 131 122.500 133.500 119.500 135C116 133 112.500 130 110.500 127.500C112 122.500 113 118 112.500 113.500C109 110 104 105 98.500 99z" fill="#3c6f86"/><path d="M112.500 113.500C117 116 121 117 125 116L127 127.500C125 131 122.500 133.500 119.500 135C116 133 112.500 130 110.500 127.500C112 122.500 113 118 112.500 113.500z" fill="#172b3a"/><path d="M75 54.500C79 50 86 45.500 92 43L105 47L119 42.500C126 45.500 131 50 134 54.500L127 61.500L124.500 60C125.500 70 127.500 82 128.800 94.500L98 103.500C94 91 89 78 85 66.500L77.500 64z" fill="url(#shb)"/><path d="M85 66.500C90 72 96 86 98 103.500L108 100.500C105 88 98 74 90 64z" fill="#b4600a" opacity=".6"/><path d="M104 56C110 62 116 64 122 62L124 70C117 73 110 70 104 64z" fill="#c9780c" opacity=".45"/><path d="M75 54.500L77.500 64L80 62.500L77.500 53z" fill="#1f2f45"/><path d="M134 54.500L127 61.500L125 59.500L131.500 52.500z" fill="#1f2f45"/><path d="M92 43C95 41 98 40 100 40L106 50L110 42C113 42 116 42 119 42.500L110 56L102 52z" fill="#1f3a56"/><path d="M97 30H108L109.500 42L104 48L96 41z" fill="#a8642a"/><ellipse cx="99.500" cy="22.500" rx="9.500" ry="12" fill="#c08040"/><path d="M89.800 20C89 11 95 6.500 101 7C107.500 7.500 111 13 110 22C107.500 17.500 104 15.500 100 16C96 16.500 92.500 17.500 89.800 20z" fill="#3a2a1a"/><path d="M106 14C110 17 111 24 109 30C107.500 26 107 20 106 14z" fill="#8a8478"/><path d="M92 22C95 21 99 21 102 22L101.500 25H93zM94 30C97 31.500 100 31.500 103 30L102 34C99 35.500 96.500 35 94.500 33.500z" fill="#5a3416" opacity=".85"/><path d="M60 52C63 51 67 53 68.500 56L70.500 63C73 65.500 76 63.500 79 59L85 66.500C82 71.500 77 75.500 71 75.500C66.500 75.500 63.500 71 62 66C60 61.500 58.500 56 60 52z" fill="#c47a2a"/><path d="M58.500 53.500C60 50.500 65 50 68 52.500C69.500 55 69 59 66.500 61.500C63 62.500 59.500 60.500 58.500 57.500z" fill="#a05c22"/><path d="M62 66C66 68 72 68 76 65L79 70C75 74 70 75.500 66 74z" fill="#e09a40" opacity=".8"/><path d="M126 56.500C130 55 136 57 140 59.500C146 59.500 153 57 159.500 54.500L162.500 58.500C157 63 150 67 143 67.500C137 67 131 64 126.500 61z" fill="#b96c24"/><path d="M135 60C140 63 146 63.500 152 61L156 63C151 66 146 67.500 143 67.500C139 67 136 64.500 135 60z" fill="#5e2c0e" opacity=".8"/><path d="M158 53C157 49 159 46 162.500 45.500C165 45 168 46 169 48.500L174 52.500L169.500 53.500C168 56 165.500 58 163 58.500C160.500 58.500 158.500 56 158 53z" fill="#8a4a1a"/><g stroke="#d89a52" stroke-width="1.500" stroke-linecap="round" fill="none"><path d="M164 46L171.500 37.500M166.500 47L175.500 40.500M168 49.500L176 45M160 47L154 42.500"/></g><path d="M157.500 55.500L163.500 59" stroke="#1d2a38" stroke-width="1.600" fill="none"/></g></svg></div><svg class="fgp" viewBox="0 0 218 218" width="218" height="218"><defs><linearGradient id="skyf" x1="0" y1="0" x2="0" y2="1"><stop offset="0" stop-color="#1f6572"/><stop offset=".1" stop-color="#2c8994"/><stop offset=".45" stop-color="#4c9fa9"/><stop offset=".8" stop-color="#9ccbd2"/><stop offset="1" stop-color="#c6dfe0"/></linearGradient><radialGradient id="sunf" cx="0" cy="0" r="1" gradientUnits="userSpaceOnUse" gradientTransform="translate(-8 70) scale(150 160)"><stop offset="0" stop-color="#f1f1e0" stop-opacity="1"/><stop offset=".25" stop-color="#e8eee0" stop-opacity=".9"/><stop offset=".5" stop-color="#dcebe4" stop-opacity=".6"/><stop offset=".72" stop-color="#d0e4e0" stop-opacity=".25"/><stop offset=".88" stop-color="#d0e4e0" stop-opacity=".07"/><stop offset="1" stop-color="#d0e4e0" stop-opacity="0"/></radialGradient><radialGradient id="sun2f" cx="0" cy="0" r="1" gradientUnits="userSpaceOnUse" gradientTransform="translate(0 0) scale(135 95)"><stop offset="0" stop-color="#f3efd6" stop-opacity="1"/><stop offset=".35" stop-color="#eceedd" stop-opacity=".85"/><stop offset=".65" stop-color="#dcebe4" stop-opacity=".4"/><stop offset=".85" stop-color="#d0e4e0" stop-opacity=".1"/><stop offset="1" stop-color="#d0e4e0" stop-opacity="0"/></radialGradient><radialGradient id="dkf" cx="0" cy="0" r="1" gradientUnits="userSpaceOnUse" gradientTransform="translate(232 0) scale(120 100)"><stop offset="0" stop-color="#0a3642" stop-opacity=".6"/><stop offset=".35" stop-color="#0c3a46" stop-opacity=".32"/><stop offset=".7" stop-color="#0e3f4c" stop-opacity=".1"/><stop offset="1" stop-color="#0e3f4c" stop-opacity="0"/></radialGradient><linearGradient id="dk2f" x1="0" y1="0" x2="0" y2="1"><stop offset="0" stop-color="#0a2f3c" stop-opacity=".35"/><stop offset=".3" stop-color="#0a2f3c" stop-opacity="0"/></linearGradient><linearGradient id="yelf" x1="0" y1="0" x2="1" y2="0"><stop offset="0" stop-color="#eaa915"/><stop offset=".35" stop-color="#f5c822"/><stop offset="1" stop-color="#f6d034"/></linearGradient><linearGradient id="ctlf" x1="0" y1="0" x2="0" y2="1"><stop offset="0" stop-color="#86a592"/><stop offset=".45" stop-color="#5a8d85"/><stop offset="1" stop-color="#3c757b"/></linearGradient><linearGradient id="ctrf" x1="0" y1="0" x2="0" y2="1"><stop offset="0" stop-color="#b4cf72"/><stop offset=".4" stop-color="#8ab43f"/><stop offset="1" stop-color="#5f9634"/></linearGradient><radialGradient id="ballf" cx=".45" cy=".45" r=".6"><stop offset="0" stop-color="#3c7a0f"/><stop offset=".55" stop-color="#6ea512"/><stop offset=".85" stop-color="#c5e019"/><stop offset="1" stop-color="#e2f03a"/></radialGradient><linearGradient id="shf" x1="0" y1="0" x2="1" y2="1"><stop offset="0" stop-color="#f9cf1d"/><stop offset=".5" stop-color="#f3b318"/><stop offset="1" stop-color="#dd8a10"/></linearGradient><linearGradient id="legf" x1="0" y1="0" x2="1" y2="0"><stop offset="0" stop-color="#4d2209"/><stop offset=".4" stop-color="#b3661a"/><stop offset="1" stop-color="#e39c3c"/></linearGradient><pattern id="meshf" width="2.500" height="2.500" patternUnits="userSpaceOnUse"><path d="M0 0H2.500M0 0V2.500" stroke="#1d3a3a" stroke-width=".4" stroke-opacity=".45" fill="none"/></pattern><clipPath id="clpf"><rect x="0" y="0" width="218" height="218"/></clipPath></defs><g clip-path="url(#clpf)"><rect width="218" height="160" fill="url(#skyf)"/><rect width="218" height="160" fill="url(#dkf)"/><rect width="218" height="160" fill="url(#dk2f)"/><rect width="218" height="160" fill="url(#sunf)"/><rect width="218" height="160" fill="url(#sun2f)"/><rect x="0" y="152" width="218" height="3" fill="#6f93a3" opacity=".6"/><rect x="0" y="155" width="218" height="5" fill="#e6dfc4" opacity=".75"/><polygon points="0,40 24,52 55,84 55,160 0,160" fill="#566b69" opacity=".36"/><polygon points="0,0 55,84 55,160 0,160" fill="url(#meshf)"/><polygon points="218,5 160,84 160,160 218,160" fill="#0d2e36" opacity=".5"/><polygon points="218,5 160,84 160,160 218,160" fill="url(#meshf)"/><rect x="55" y="85" width="105" height="75" fill="#bcd9e0" opacity=".25"/><g fill="#7a3c16"><rect x="4" y="142" width="47" height="4.500"/><rect x="6" y="148.500" width="45" height="4"/><rect x="8" y="154" width="43" height="3.500" fill="#5a2a0e"/><rect x="65.500" y="141.500" width="21.500" height="4.500"/><rect x="66" y="148" width="21" height="3.500" fill="#6a3212"/><rect x="67" y="152" width="1.500" height="7" fill="#2b1a10"/><rect x="84" y="152" width="1.500" height="7" fill="#2b1a10"/><rect x="163" y="142" width="46" height="5" fill="#5c2c10"/><rect x="161" y="148.500" width="46" height="4" fill="#6a3212"/><rect x="161" y="154" width="44" height="4" fill="#4a220c"/></g><rect x="0" y="159.300" width="218" height="25" fill="url(#yelf)"/><rect x="0" y="159.300" width="218" height="2.500" fill="#d98c10" opacity=".55"/><polygon points="0,160 52,160 30,164 0,165" fill="#3a2a10" opacity=".75"/><polygon points="58,162 68,160.500 66,163.500 55,164.500" fill="#3a2a10" opacity=".7"/><polygon points="160,160 218,160 218,163 175,162" fill="#7a3a10" opacity=".6"/><polygon points="0,181.300 37.300,170.600 117.500,171.700 116,218 0,218" fill="url(#ctlf)"/><polygon points="119.500,172.500 218,175.300 218,218 123,218" fill="url(#ctrf)"/><polygon points="119.500,172.500 218,175.300 218,177.300 119.700,174.300" fill="#d9dfa0" opacity=".8"/><g stroke="#d6e6c8" stroke-opacity=".35" stroke-width="1.200" fill="none"><path d="M5 200H60M20 206H100M0 212H70M40 186H110M10 193H50"/><path d="M130 182H210M128 190H200M135 212H215M150 205H170" stroke="#e6f0b0"/></g><polygon points="0,180 37,169.800 95,171 95,172.600 37.500,171.800 0,182.500" fill="#16343a" opacity=".85"/><polygon points="24,175.300 93,180 93,182.300 24,177.300" fill="#123038" opacity=".9"/><polygon points="0,187.500 72,194.500 72,198.500 0,192" fill="#0e2a33" opacity=".95"/><polygon points="0,209 40,214 60,218 0,218" fill="#1c5460" opacity=".5"/><path d="M142 186.500C150 183 158 181 164 179.500C166 177.500 172 177.300 183 178.200L202 181.300C196 182.800 189 182.200 184 182C178 182 170 183 166.500 184.500C167 187 170 190 176 191.500L218 195.500V212.500C208 211 196 208 186 205C170 200 152 193 142 186.500z" fill="#0c2423"/><polygon points="109,196.500 160,201.500 200,206.500 200,211 160,206.500 109,201.500" fill="#10291f" opacity=".95"/><polygon points="116.300,171.500 120.300,171.500 123.800,218 115.200,218" fill="#f4f5e6"/><polygon points="109,160 117.500,160 117.500,171.500 109,171.500" fill="#b5740f"/><polygon points="109,171.500 116.300,171.500 115.200,218 109,218" fill="#1f6d78" opacity=".7"/><g stroke="#1a2826" fill="none" stroke-linecap="butt"><path d="M30 84.700H183" stroke-width="1.300"/><path d="M0 87H22" stroke-width="1"/><path d="M55 110H160M55 122H160" stroke-width=".9" stroke-opacity=".85"/><path d="M0 110H55M0 122H24M0 140H55" stroke-width=".8" stroke-opacity=".8"/><path d="M160 97H218M160 110H218M186 122H218" stroke-width=".9" stroke-opacity=".9"/><path d="M81.300 84.700V159M132.300 84.700V159M68 97V159M146 110V159" stroke-width="1"/><path d="M6.500 87V159M30 84.700V159M36 97V159" stroke-width=".8" stroke-opacity=".8"/><path d="M24.500 52V161" stroke-width="4"/><path d="M44.700 72V160" stroke-width="3.600"/><path d="M55 84V160" stroke-width="1.400"/><path d="M31.600 52.500L55 84" stroke-width="1.200"/><path d="M0 69.500L21.500 87L44 107" stroke-width="1.300"/><path d="M0 101L22 114L44 128" stroke-width="1"/><path d="M185.800 47.400V160" stroke-width="3.600"/><path d="M166.800 74.500V160" stroke-width="2"/><path d="M160 84V160" stroke-width="1.200"/><path d="M171 110V159M177 97V159M202 97V159M211 110V159M193 110V159" stroke-width=".9" stroke-opacity=".85"/><path d="M218 67.800L163.200 106.200" stroke-width="1.500" stroke="#3a3320"/><path d="M218 5.600L159.800 83.600" stroke-width="1.200" stroke="#4a4a32"/></g><path d="M0 0L16 20.500" stroke="#b08a2a" stroke-width="1.300" fill="none"/><g stroke="#2a3a3a" stroke-width=".7" stroke-opacity=".7" fill="none"><path d="M55 146H160M58 146V159M62 146V159M90 146V159M96 146V159M102 146V159M139 146V159M150 146V159M155 146V159"/></g><g transform="translate(27.300 36) rotate(24) scale(1.040)"><path d="M-19 -2C-19 -11 -11 -16.500 -1 -16.500C9 -16.500 16 -12 19.500 -6L26 -1.500L26 3L19 6.500C14 12 7 14.500 -2 14.500C-12 14.500 -19 8 -19 -2z" fill="#9bc51d"/><path d="M-18.500 -3.500C-18.500 -12 -10.500 -17 -1 -17C9 -17 16.500 -12.500 20 -6.500L26.500 -2.500L26.500 1.500L19.500 5C14.500 10.500 7.500 12.500 -1.500 12.500C-11.500 12.500 -18.500 5 -18.500 -3.500z" fill="#1e2120"/><g fill="#e8e8e0"><circle cx="-11" cy="-6" r="1"/><circle cx="-8" cy="-9" r="1"/><circle cx="-5" cy="-11.500" r="1"/><circle cx="-1.500" cy="-12.500" r="1"/><circle cx="-12.500" cy="-2.500" r="1"/><circle cx="-9" cy="-4.500" r="1"/><circle cx="-6" cy="-7.500" r="1"/><circle cx="-2.500" cy="-9" r="1"/><circle cx="1.500" cy="-10" r="1"/><circle cx="-11.500" cy="1.500" r="1"/><circle cx="-8.500" cy="-.5" r="1"/><circle cx="-10" cy="5" r="1"/><circle cx="-7" cy="3" r="1"/><circle cx="-5.500" cy="7" r="1"/><circle cx="-2.500" cy="5" r="1"/><circle cx="2" cy="3.500" r="1"/></g><g fill="#e3df2a"><circle cx="-5" cy="-3.500" r="1.100"/><circle cx="-1.500" cy="-5.500" r="1.100"/><circle cx="2.500" cy="-6.500" r="1.100"/><circle cx="6" cy="-7" r="1.100"/><circle cx="-4" cy=".5" r="1.100"/><circle cx="-.5" cy="-1.500" r="1.100"/><circle cx="3.500" cy="-2.500" r="1.100"/><circle cx="7" cy="-3" r="1.100"/><circle cx="1" cy="8" r="1.100"/><circle cx="4.500" cy="7" r="1.100"/><circle cx="8" cy="5.500" r="1.100"/><circle cx="6" cy="1.500" r="1.100"/><circle cx="9.500" cy="0" r="1.100"/></g><path d="M13.500 -3L19 -1L14 3z" fill="#dfe6e4"/><path d="M24 -.5L41 -.5" stroke="#15181a" stroke-width="3.600" fill="none"/><path d="M29.500 -.5H32.500" stroke="#8fd21a" stroke-width="3.800" fill="none"/></g><ellipse cx="61.900" cy="17.600" rx="8" ry="9" fill="url(#ballf)" transform="rotate(-15 61.900 17.600)"/><path d="M112 112L128 118L131 130L141 138L143 146L133 148L124 147L117 135z" fill="#b9661c"/><path d="M112 112L122 116L120 130L126 147L117 135z" fill="#6b3410" opacity=".7"/><path d="M138.500 137.500C141 135 146 135 148 138L148.500 147C149 152 148 157 145.500 158.500C142.500 158 141 152 140 148z" fill="#f2efd8"/><path d="M141 149C143 152 144 156 145.500 158.500C148 157 149 152 148.500 147z" fill="#e8e08a"/><path d="M141 138L146 146" stroke="#2a3540" stroke-width="1.300" fill="none"/><path d="M96 100L112 104C113 110 112 116 110 121C108.500 128 108.500 134 108 142C107.500 152 106.500 160 103 169.500L95.500 169.500C96 160 95.500 152 95 145C94.500 137 93 130 93.500 124C93.500 116 94 108 96 100z" fill="url(#legf)"/><path d="M100 112C104 113 107 116 108 121C106 124 103 125 99 124C97 120 98 115 100 112z" fill="#e8a848" opacity=".75"/><path d="M95 168.500H103.500L104 177H95z" fill="#f4f4f0"/><path d="M72.500 197C73 192 80 187 87 183C90 180 92 176 95 174.500L104.500 176.500C106 180 108 184 108 188.500C108 192 104 194 99 195.500C92 198 84 200.500 78 200.500C74 200.500 72 199 72.500 197z" fill="#f1f1ea"/><path d="M72.500 197C76 199 84 198.500 92 196C100 193.500 106 191 108 188.500C108 192 104 194 99 195.500C92 198 84 200.500 78 200.500C74 200.500 72 199 72.500 197z" fill="#c9d23a"/><path d="M92 183C97 186 102 188 107 188.500" stroke="#1c2b3a" stroke-width="1.600" fill="none"/><path d="M96 176L104 180" stroke="#26343f" stroke-width="1.200" fill="none"/><path d="M98 103L129 94C131 99 131 104 130 108C128 112 125 116 122 118.500L127 127.500C125 131 122.500 133.500 119.500 135C116 133 112.500 130 110.500 127.500C112 122.500 113 118 112.500 113.500C109 110 104 105 98.500 99z" fill="#3c6f86"/><path d="M112.500 113.500C117 116 121 117 125 116L127 127.500C125 131 122.500 133.500 119.500 135C116 133 112.500 130 110.500 127.500C112 122.500 113 118 112.500 113.500z" fill="#172b3a"/><path d="M75 54.500C79 50 86 45.500 92 43L105 47L119 42.500C126 45.500 131 50 134 54.500L127 61.500L124.500 60C125.500 70 127.500 82 128.800 94.500L98 103.500C94 91 89 78 85 66.500L77.500 64z" fill="url(#shf)"/><path d="M85 66.500C90 72 96 86 98 103.500L108 100.500C105 88 98 74 90 64z" fill="#b4600a" opacity=".6"/><path d="M104 56C110 62 116 64 122 62L124 70C117 73 110 70 104 64z" fill="#c9780c" opacity=".45"/><path d="M75 54.500L77.500 64L80 62.500L77.500 53z" fill="#1f2f45"/><path d="M134 54.500L127 61.500L125 59.500L131.500 52.500z" fill="#1f2f45"/><path d="M92 43C95 41 98 40 100 40L106 50L110 42C113 42 116 42 119 42.500L110 56L102 52z" fill="#1f3a56"/><path d="M97 30H108L109.500 42L104 48L96 41z" fill="#a8642a"/><ellipse cx="99.500" cy="22.500" rx="9.500" ry="12" fill="#c08040"/><path d="M89.800 20C89 11 95 6.500 101 7C107.500 7.500 111 13 110 22C107.500 17.500 104 15.500 100 16C96 16.500 92.500 17.500 89.800 20z" fill="#3a2a1a"/><path d="M106 14C110 17 111 24 109 30C107.500 26 107 20 106 14z" fill="#8a8478"/><path d="M92 22C95 21 99 21 102 22L101.500 25H93zM94 30C97 31.500 100 31.500 103 30L102 34C99 35.500 96.500 35 94.500 33.500z" fill="#5a3416" opacity=".85"/><path d="M60 52C63 51 67 53 68.500 56L70.500 63C73 65.500 76 63.500 79 59L85 66.500C82 71.500 77 75.500 71 75.500C66.500 75.500 63.500 71 62 66C60 61.500 58.500 56 60 52z" fill="#c47a2a"/><path d="M58.500 53.500C60 50.500 65 50 68 52.500C69.500 55 69 59 66.500 61.500C63 62.500 59.500 60.500 58.500 57.500z" fill="#a05c22"/><path d="M62 66C66 68 72 68 76 65L79 70C75 74 70 75.500 66 74z" fill="#e09a40" opacity=".8"/><path d="M126 56.500C130 55 136 57 140 59.500C146 59.500 153 57 159.500 54.500L162.500 58.500C157 63 150 67 143 67.500C137 67 131 64 126.500 61z" fill="#b96c24"/><path d="M135 60C140 63 146 63.500 152 61L156 63C151 66 146 67.500 143 67.500C139 67 136 64.500 135 60z" fill="#5e2c0e" opacity=".8"/><path d="M158 53C157 49 159 46 162.500 45.500C165 45 168 46 169 48.500L174 52.500L169.500 53.500C168 56 165.500 58 163 58.500C160.500 58.500 158.500 56 158 53z" fill="#8a4a1a"/><g stroke="#d89a52" stroke-width="1.500" stroke-linecap="round" fill="none"><path d="M164 46L171.500 37.500M166.500 47L175.500 40.500M168 49.500L176 45M160 47L154 42.500"/></g><path d="M157.500 55.500L163.500 59" stroke="#1d2a38" stroke-width="1.600" fill="none"/></g></svg></div>
<div class="card c2 r1 tall"><div class="circ or"><svg viewBox="0 0 512 512" style="left:9.70px;top:9.70px;width:23.60px;height:23.60px;color:#f59e0b" fill="#f59e0b"><path d="M256 32C114.600 32 0 125.100 0 240c0 49.600 21.400 95 57 130.700C44.500 421.100 2.700 466 2.200 466.500c-2.200 2.300-2.800 5.700-1.500 8.700S4.800 480 8 480c66.300 0 116-31.800 140.600-51.400 32.700 12.300 69 19.400 107.400 19.400 141.400 0 256-93.100 256-208S397.400 32 256 32z"/></svg></div><div class="lbl">Message</div><div class="msg" style="top:46.7px;transform:scaleX(.948)">The sauna is broken and will be</div><div class="msg" style="top:67.2px;transform:scaleX(.9495)">fixed Monday next week. Do not</div><div class="msg" style="top:87.9px;transform:scaleX(.977)">let customers in.</div></div>
<div class="card c3 r1"><div class="circ pu"><svg viewBox="0 0 512 512" style="left:10.00px;top:10.00px;width:23.00px;height:23.00px;color:#b037cc" fill="#b037cc"><path d="M256 512A256 256 0 1 0 256 0a256 256 0 1 0 0 512zM369 209L241 337c-9.400 9.400-24.600 9.400-33.900 0l-64-64c-9.400-9.400-9.400-24.600 0-33.900s24.600-9.400 33.900 0l47 47L335 175c9.400-9.400 24.600-9.400 33.900 0s9.400 24.600 0 33.900z"/></svg></div><div class="lbl">New members today</div><div class="val" style="top:45px;">2</div></div>
<div class="card c4 r1"><div class="circ pu"><svg viewBox="0 0 512 512" style="left:10.00px;top:10.00px;width:23.00px;height:23.00px;color:#b037cc" fill="#b037cc"><path d="M256 512A256 256 0 1 0 256 0a256 256 0 1 0 0 512zM369 209L241 337c-9.400 9.400-24.600 9.400-33.900 0l-64-64c-9.400-9.400-9.400-24.600 0-33.900s24.600-9.400 33.900 0l47 47L335 175c9.400-9.400 24.600-9.400 33.900 0s9.400 24.600 0 33.900z"/></svg></div><div class="lbl">New members last 30 days</div><div class="val" style="top:45px;">17</div></div>
<div class="card c3 r2 tall"><div class="circ pu"><svg viewBox="0 0 512 512" style="left:10.00px;top:10.00px;width:23.00px;height:23.00px;color:#b037cc" fill="#b037cc"><path d="M256 512A256 256 0 1 0 256 0a256 256 0 1 0 0 512zM369 209L241 337c-9.400 9.400-24.600 9.400-33.900 0l-64-64c-9.400-9.400-9.400-24.600 0-33.900s24.600-9.400 33.900 0l47 47L335 175c9.400-9.400 24.600-9.400 33.900 0s9.400 24.600 0 33.900z"/></svg></div><div class="lbl">New members last seven days</div><div class="val" style="top:45px;">13</div><div class="chart"><div class="axis"></div><div class="bar" style="left:95px;height:20px"></div><div class="bl2" style="left:95px">F</div><div class="bar" style="left:127px;height:78px"></div><div class="bl2" style="left:127px">S</div><div class="bl2" style="left:159px">S</div><div class="bar" style="left:192px;height:39px"></div><div class="bl2" style="left:192px">M</div><div class="bar" style="left:224px;height:20px"></div><div class="bl2" style="left:224px">T</div><div class="bar" style="left:256px;height:59px"></div><div class="bl2" style="left:256px">W</div><div class="bar on" style="left:289px;height:39px"></div><div class="bl2" style="left:289px">T</div></div></div>
<div class="card c4 r2"><div class="circ gr"><svg viewBox="0 0 320 512" style="left:14.00px;top:9.50px;width:15.00px;height:24.00px;color:#22b24c" fill="#22b24c"><path d="M160 0c17.700 0 32 14.300 32 32V67.700c1.600 .200 3.100 .400 4.700 .700c.400 .100 .700 .100 1.100 .200l48 8.800c17.400 3.200 28.900 19.900 25.700 37.200s-19.900 28.900-37.200 25.700l-47.500-8.700c-31.300-4.600-58.900-1.500-78.300 6.200s-27.200 18.300-29 28.100c-2 10.700-.500 16.700 1.200 20.400c1.800 3.900 5.500 8.300 12.800 13.200c16.300 10.700 41.300 17.700 73.700 26.300l2.900 .800c28.600 7.600 63.600 16.800 89.600 33.800c14.200 9.300 27.600 21.900 35.900 39.500c8.500 17.900 10.300 37.900 6.400 59.200c-6.900 38-33.100 63.400-65.600 76.700c-13.700 5.600-28.600 9.200-44.400 11V480c0 17.700-14.300 32-32 32s-32-14.300-32-32V445.100c-.400-.100-.900-.100-1.300-.200l-.200 0 0 0c-24.400-3.800-64.500-14.300-91.500-26.300c-16.100-7.200-23.400-26.100-16.200-42.200s26.100-23.400 42.200-16.200c20.900 9.300 55.300 18.500 75.200 21.600c31.900 4.700 58.200 2 76-5.300c16.900-6.900 24.600-16.900 26.800-28.900c1.900-10.600 .400-16.700-1.300-20.400c-1.900-4-5.600-8.400-13-13.300c-16.400-10.700-41.500-17.700-74-26.300l-2.800-.700 0 0C119.400 279.300 84.400 270 58.400 253c-14.200-9.300-27.500-22-35.800-39.600c-8.400-17.900-10.100-37.900-6.100-59.200C23.700 116 52.300 91.200 84.800 78.300c13.300-5.300 27.900-8.900 43.200-11V32c0-17.700 14.300-32 32-32z"/></svg></div><div class="lbl" style="letter-spacing:0.08px;">Sales this month</div><div class="val" style="top:45px;">43 117</div></div>
<div class="card c1 r3"><div class="circ bl"><svg viewBox="0 0 448 512" style="left:11.00px;top:9.50px;width:21.00px;height:24.00px;color:#4361ee" fill="#4361ee"><path d="M224 512c35.32 0 63.97-28.65 63.97-64H160.03c0 35.35 28.65 64 63.97 64zm215.39-149.71c-19.32-20.76-55.47-51.99-55.47-154.29 0-77.7-54.48-139.9-127.94-155.16V32c0-17.67-14.32-32-31.980-32s-31.980 14.330-31.980 32v20.840C118.560 68.100 64.080 130.300 64.080 208c0 102.300-36.150 133.530-55.470 154.290-6 6.450-8.660 14.160-8.610 21.710.110 16.400 12.980 32 32.100 32h383.800c19.120 0 32-15.600 32.100-32 .050-7.550-2.610-15.270-8.610-21.710z"/></svg></div><div class="lbl">Unmatched payments</div><div class="val" style="top:45px;">0</div></div>
<div class="card c2 r3"><div class="circ bl"><svg viewBox="0 0 448 512" style="left:11.00px;top:9.50px;width:21.00px;height:24.00px;color:#4361ee" fill="#4361ee"><path d="M224 512c35.32 0 63.97-28.65 63.97-64H160.03c0 35.35 28.65 64 63.97 64zm215.39-149.71c-19.32-20.76-55.47-51.99-55.47-154.29 0-77.7-54.48-139.9-127.94-155.16V32c0-17.67-14.32-32-31.980-32s-31.980 14.330-31.980 32v20.840C118.560 68.100 64.080 130.300 64.080 208c0 102.300-36.150 133.530-55.470 154.290-6 6.450-8.660 14.160-8.610 21.710.110 16.400 12.980 32 32.100 32h383.800c19.120 0 32-15.600 32.100-32 .050-7.550-2.610-15.270-8.610-21.710z"/></svg></div><div class="lbl">Overpaid invoices</div><div class="val" style="top:45px;">2</div></div>
<div class="card c4 r3"><div class="circ or"><svg viewBox="0 0 24 24" style="left:9.50px;top:9.50px;width:24.00px;height:24.00px;color:#f59e0b" fill="#f59e0b"><rect x="0.500" y="4" width="23" height="16" rx="2.600"/><path d="M9.300 8.900C7.500 7.700 5 8.300 5 10c0 2.300 4.400 1.500 4.400 3.900c0 1.800-2.700 2.300-4.600 1.000M7.200 6.800v1.400M7.200 15.700v1.500" fill="none" stroke="#fff" stroke-width="1.300" stroke-linecap="round"/><path d="M11.600 10.100h9.500M11.600 14.100h9.500" stroke="#fff" stroke-opacity=".85" stroke-width="1.300" stroke-linecap="round"/></svg></div><div class="lbl">Invoices overdue</div><div class="val" style="top:45px;">38</div></div>
<div class="card c1 r4"><div class="circ rd"><svg viewBox="0 0 24 24" style="left:9.70px;top:9.70px;width:23.60px;height:23.60px;color:#ef3b3b" fill="#ef3b3b"><path d="M4.580 4.580A10.500 10.500 0 1 1 5.680 20.390" fill="none" stroke="currentColor" stroke-width="2.600" stroke-linecap="round"/><path d="M0.300 1.900V8.900H7.300z" stroke="currentColor" stroke-width="0.800" stroke-linejoin="round"/><path d="M12.100 6.300V11.600L15.400 15.100" fill="none" stroke="currentColor" stroke-width="2.200" stroke-linecap="round" stroke-linejoin="round"/></svg></div><div class="lbl" style="letter-spacing:0.1px;">Membership subscriptions ending in<br>the next 30 days</div><div class="val" style="top:59px;">8</div></div>
<div class="card c2 r4"><div class="circ bl"><svg viewBox="0 0 448 512" style="left:11.00px;top:9.50px;width:21.00px;height:24.00px;color:#4361ee" fill="#4361ee"><path d="M224 512c35.32 0 63.97-28.65 63.97-64H160.03c0 35.35 28.65 64 63.97 64zm215.39-149.71c-19.32-20.76-55.47-51.99-55.47-154.29 0-77.7-54.48-139.9-127.94-155.16V32c0-17.67-14.32-32-31.980-32s-31.980 14.330-31.980 32v20.840C118.560 68.100 64.080 130.300 64.080 208c0 102.300-36.150 133.530-55.470 154.290-6 6.450-8.660 14.160-8.610 21.710.110 16.400 12.980 32 32.100 32h383.800c19.120 0 32-15.600 32.100-32 .050-7.550-2.610-15.270-8.610-21.710z"/></svg></div><div class="lbl" style="letter-spacing:0.07px;">No shows today</div><div class="val" style="top:41.5px;">2</div></div>
<div class="card c3 r4"><div class="circ bl"><svg viewBox="0 0 448 512" style="left:11.00px;top:9.50px;width:21.00px;height:24.00px;color:#4361ee" fill="#4361ee"><path d="M224 512c35.32 0 63.97-28.65 63.97-64H160.03c0 35.35 28.65 64 63.97 64zm215.39-149.71c-19.32-20.76-55.47-51.99-55.47-154.29 0-77.7-54.48-139.9-127.94-155.16V32c0-17.67-14.32-32-31.980-32s-31.980 14.330-31.980 32v20.840C118.560 68.100 64.080 130.300 64.080 208c0 102.300-36.150 133.530-55.470 154.290-6 6.450-8.660 14.160-8.610 21.710.110 16.400 12.980 32 32.100 32h383.800c19.120 0 32-15.600 32.100-32 .050-7.550-2.610-15.270-8.610-21.710z"/></svg></div><div class="lbl" style="letter-spacing:0.07px;">Cancelled membership subscriptions<br>last seven days</div><div class="val" style="top:59px;">0</div></div>
<div class="card c4 r4"><div class="circ rd"><svg viewBox="0 0 24 24" style="left:9.70px;top:9.70px;width:23.60px;height:23.60px;color:#ef3b3b" fill="#ef3b3b"><path d="M4.580 4.580A10.500 10.500 0 1 1 5.680 20.390" fill="none" stroke="currentColor" stroke-width="2.600" stroke-linecap="round"/><path d="M0.300 1.900V8.900H7.300z" stroke="currentColor" stroke-width="0.800" stroke-linejoin="round"/><path d="M12.100 6.300V11.600L15.400 15.100" fill="none" stroke="currentColor" stroke-width="2.200" stroke-linecap="round" stroke-linejoin="round"/></svg></div><div class="lbl" style="letter-spacing:0.08px;">Missing direct debit mandates (Swe)</div><div class="val" style="top:45px;">52</div></div>
<div class="card c1 r5"><div class="circ pu"><svg viewBox="0 0 512 512" style="left:10.00px;top:10.00px;width:23.00px;height:23.00px;color:#b037cc" fill="#b037cc"><path d="M256 512A256 256 0 1 0 256 0a256 256 0 1 0 0 512zM369 209L241 337c-9.400 9.400-24.600 9.400-33.900 0l-64-64c-9.400-9.400-9.400-24.600 0-33.900s24.600-9.400 33.900 0l47 47L335 175c9.400-9.400 24.600-9.400 33.900 0s9.400 24.600 0 33.900z"/></svg></div><div class="lbl" style="letter-spacing:0.09px;">New organization customers</div><div class="val" style="top:41.5px;">4</div></div>
<div class="card c2 r5"><div class="circ bl"><svg viewBox="0 0 448 512" style="left:11.00px;top:9.50px;width:21.00px;height:24.00px;color:#4361ee" fill="#4361ee"><path d="M224 512c35.32 0 63.97-28.65 63.97-64H160.03c0 35.35 28.65 64 63.97 64zm215.39-149.71c-19.32-20.76-55.47-51.99-55.47-154.29 0-77.7-54.48-139.9-127.94-155.16V32c0-17.67-14.32-32-31.980-32s-31.980 14.330-31.980 32v20.840C118.560 68.100 64.080 130.300 64.080 208c0 102.300-36.150 133.530-55.470 154.290-6 6.450-8.660 14.160-8.610 21.710.110 16.400 12.980 32 32.100 32h383.800c19.120 0 32-15.600 32.100-32 .050-7.550-2.610-15.270-8.610-21.710z"/></svg></div><div class="lbl" style="letter-spacing:0.12px;">Visits today</div><div class="val" style="top:41.5px;">34</div></div>
<div class="card c3 r5"><div class="circ bl"><svg viewBox="0 0 448 512" style="left:11.00px;top:9.50px;width:21.00px;height:24.00px;color:#4361ee" fill="#4361ee"><path d="M224 512c35.32 0 63.97-28.65 63.97-64H160.03c0 35.35 28.65 64 63.97 64zm215.39-149.71c-19.32-20.76-55.47-51.99-55.47-154.29 0-77.7-54.48-139.9-127.94-155.16V32c0-17.67-14.32-32-31.980-32s-31.980 14.330-31.980 32v20.840C118.560 68.100 64.080 130.300 64.080 208c0 102.300-36.150 133.530-55.470 154.290-6 6.450-8.660 14.160-8.610 21.710.110 16.400 12.980 32 32.100 32h383.800c19.120 0 32-15.600 32.100-32 .050-7.550-2.610-15.270-8.610-21.710z"/></svg></div><div class="lbl" style="letter-spacing:0.12px;">Not debited bookings</div><div class="val" style="top:45px;">85</div></div>
<div class="card c4 r5"><div class="circ bl"><svg viewBox="0 0 320 512" style="left:14.00px;top:9.50px;width:15.00px;height:24.00px;color:#4361ee" fill="#4361ee"><path d="M160 0c17.700 0 32 14.300 32 32V67.700c1.600 .200 3.100 .400 4.700 .700c.400 .100 .700 .100 1.100 .200l48 8.800c17.400 3.200 28.900 19.900 25.700 37.200s-19.900 28.900-37.200 25.700l-47.500-8.700c-31.300-4.600-58.900-1.500-78.300 6.200s-27.200 18.300-29 28.100c-2 10.700-.500 16.700 1.200 20.400c1.800 3.900 5.500 8.300 12.800 13.200c16.300 10.700 41.300 17.700 73.700 26.300l2.900 .800c28.600 7.600 63.600 16.800 89.600 33.800c14.200 9.300 27.600 21.900 35.900 39.500c8.500 17.900 10.300 37.900 6.400 59.200c-6.900 38-33.100 63.400-65.600 76.700c-13.700 5.600-28.600 9.200-44.400 11V480c0 17.700-14.300 32-32 32s-32-14.300-32-32V445.100c-.400-.100-.900-.100-1.300-.200l-.200 0 0 0c-24.400-3.800-64.500-14.300-91.500-26.300c-16.100-7.200-23.400-26.100-16.200-42.200s26.100-23.400 42.200-16.200c20.900 9.300 55.300 18.500 75.200 21.600c31.900 4.700 58.200 2 76-5.300c16.900-6.900 24.600-16.900 26.800-28.900c1.900-10.600 .400-16.700-1.300-20.400c-1.900-4-5.600-8.400-13-13.300c-16.400-10.700-41.500-17.700-74-26.300l-2.800-.700 0 0C119.400 279.300 84.400 270 58.400 253c-14.200-9.300-27.500-22-35.800-39.600c-8.400-17.900-10.100-37.900-6.100-59.200C23.700 116 52.300 91.200 84.800 78.300c13.300-5.300 27.900-8.900 43.200-11V32c0-17.700 14.300-32 32-32z"/></svg></div><div class="lbl" style="letter-spacing:0.1px;">Value of not debited bookings</div><div class="val" style="top:45px;font-weight:normal;-webkit-text-stroke:0.5px #000;margin-left:1.4px;letter-spacing:0.75px;">£23,011</div></div>
</div>
</div>
</body>
</html>
